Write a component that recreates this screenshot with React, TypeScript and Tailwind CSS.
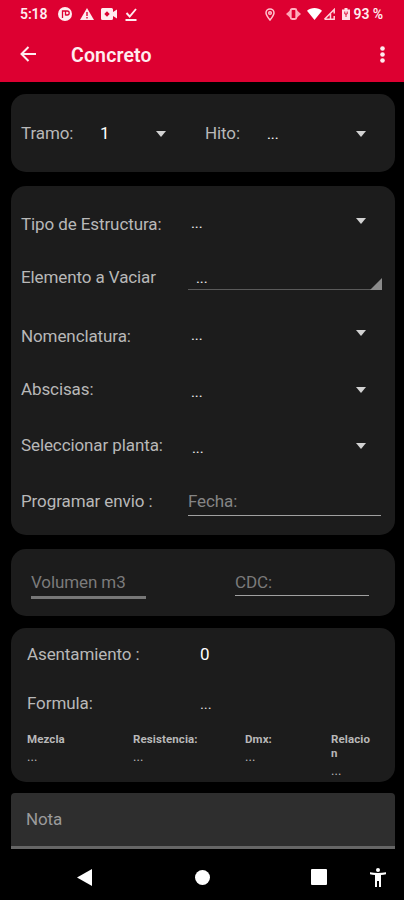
import React from 'react';

type FieldRowProps = {
  label: string;
  className: string;
  valueClassName?: string;
  arrowClassName?: string;
};

const Caret: React.FC<{ className?: string }> = ({ className = '' }) => (
  <svg viewBox="0 0 10 6" className={`h-[6px] w-[10px] fill-[#d2d2d2] ${className}`}>
    <path d="M0 0h10L5 6z" />
  </svg>
);

const Card: React.FC<{ className?: string; children: React.ReactNode }> = ({
  className = '',
  children
}) => <section className={`rounded-[15px] bg-[#1c1c1c] ${className}`}>{children}</section>;

const FieldRow: React.FC<FieldRowProps> = ({
  label,
  className,
  valueClassName = '',
  arrowClassName = ''
}) => (
  <div className={`flex items-center ${className}`}>
    <span className="w-[170px] whitespace-nowrap">{label}</span>
    <span className={`text-[15px] text-[#f0f0f0] ${valueClassName}`}>...</span>
    <Caret className={`mr-[29px] ml-auto ${arrowClassName}`} />
  </div>
);

const StatusBar = () => (
  <div className="flex h-7 items-center pr-[21px] pl-[20px] text-[14px] font-semibold text-[#ffecef]">
    <span className="w-[38px] tracking-[-0.1px]">5:18</span>
    <svg viewBox="0 0 14 14" className="h-[14px] w-[14px]">
      <circle cx="7" cy="7" r="7" fill="#ffecef" />
      <path d="M4.5 11V4h3M7.5 8.500V4h1.700a2 2 0 0 1 0 4H7.500" fill="none" stroke="#dd0031" strokeWidth="1.3" />
    </svg>
    <svg viewBox="0 0 14 12" className="ml-[8px] h-[12px] w-[14px]">
      <path d="M7 0l7 12H0z" fill="#ffecef" />
      <path d="M7 4v4M7 9v1.5" stroke="#dd0031" strokeWidth="1.4" />
    </svg>
    <svg viewBox="0 0 16 12" className="ml-[7px] h-[12px] w-[16px]">
      <path d="M1.5 0h9A1.5 1.5 0 0 1 12 1.5V4l4-2.5v9L12 8v2.5a1.5 1.5 0 0 1-1.5 1.5h-9A1.5 1.5 0 0 1 0 10.5v-9A1.5 1.5 0 0 1 1.5 0z" fill="#ffecef" />
      <path d="M6 3.3l2.7 2.700L6 8.700 3.300 6z" fill="#dd0031" />
    </svg>
    <svg viewBox="0 0 12 13" className="ml-[8px] h-[13px] w-[12px]" fill="none" stroke="#ffecef" strokeWidth="1.9">
      <path d="M1.5 5l3.200 3.500L11 1M0.500 12h11" />
    </svg>

    <svg viewBox="0 0 10 13" className="ml-auto h-[13px] w-[10px]" fill="none" stroke="#ffc4cf" strokeWidth="1.5">
      <path d="M5 12C2.500 8.800 1 6.800 1 4.900a4 4 0 0 1 8 0C9 6.800 7.500 8.800 5 12z" />
      <circle cx="5" cy="5" r="1.3" />
    </svg>
    <svg viewBox="0 0 15 12" className="ml-[11px] h-[12px] w-[15px]">
      <path d="M4.500 2v8L0 6zM10.500 2v8L15 6z" fill="#ffa5b6" />
      <rect x="4.700" y="1" width="5.600" height="10" rx="1.500" fill="none" stroke="#ffb0bf" strokeWidth="1.9" />
    </svg>
    <svg viewBox="0 0 15 12" className="ml-[6px] h-[12px] w-[15px] fill-white">
      <path d="M7.500 12L0 2.800C4-.9 11-.9 15 2.800z" />
    </svg>
    <svg viewBox="0 0 12 12" className="ml-[1px] h-[12px] w-[12px]" fill="none" stroke="#ffd3db" strokeWidth="1.5">
      <path d="M1.500 11.200L11.200 1.500v4M11.200 8v3.200H1.500M7.500 6v5" />
    </svg>
    <svg viewBox="0 0 8 12" className="ml-[7px] h-[12px] w-[8px]">
      <path d="M2.500 0h3v1.500H8V12H0V1.500h2.500z" fill="#ffe0e6" />
      <path d="M2.800 3.500v2.500h2.400V3.500M4 6v3" fill="none" stroke="#dd0031" strokeWidth="0.9" />
    </svg>
    <span className="ml-[4px] whitespace-nowrap">93 %</span>
  </div>
);

const NavigationBar = () => (
  <nav className="flex h-[51px] items-center pt-[5px] pl-[77px]">
    <svg viewBox="0 0 15 17" className="h-[17px] w-[15px] fill-white">
      <path d="M15 0v17L0 8.500z" />
    </svg>
    <span className="ml-[103px] size-[15px] rounded-full bg-white"></span>
    <span className="ml-[101px] size-[16px] rounded-[1px] bg-white"></span>
    <svg viewBox="0 0 16 19" className="ml-[43px] h-[19px] w-[16px] fill-white">
      <circle cx="8" cy="2" r="2" />
      <path d="M0 4.300c5 1 11 1 16 0v1.900c-1.700.4-3.300.6-5 .7V19H9v-6H7v6H5V6.900c-1.700-.1-3.300-.3-5-.7z" />
    </svg>
  </nav>
);

const mixColumns = [
  { title: 'Mezcla', width: 'w-[106px]' },
  { title: 'Resistencia:', width: 'w-[112px]' },
  { title: 'Dmx:', width: 'w-[86px]' },
  { title: 'Relacion', width: 'w-[43px]' }
];

const App = () => {
  return (
    <div className="flex h-[900px] w-[404px] flex-col overflow-hidden bg-black font-['Roboto',sans-serif] text-[17px] tracking-[-0.1px] text-[#b8b8b8]">
      <header className="h-[82px] bg-[#dd0031]">
        <StatusBar />
        <div className="flex h-[54px] items-center pl-[20px]">
          <svg viewBox="0 0 16 16" className="mb-[2px] size-[16px]" fill="none" stroke="#ffecef" strokeWidth="2">
            <path d="M16 8H1.500M8.500 1L1.500 8l7 7" />
          </svg>
          <h1 className="ml-[35px] pt-[1px] text-[19.5px] font-semibold tracking-[0.15px] text-[#ffecef]">Concreto</h1>
          <svg viewBox="0 0 5 17" className="mr-[19px] mb-px ml-auto h-[17px] w-[5px] fill-[#ffecef]">
            <circle cx="2.500" cy="2.500" r="2.300" />
            <circle cx="2.500" cy="8.500" r="2.300" />
            <circle cx="2.500" cy="14.500" r="2.300" />
          </svg>
        </div>
      </header>

      <main className="flex flex-col pr-[9px] pl-[11px]">
        <Card className="mt-[12px] flex h-[78px] items-center pt-px pl-[10px]">
          <span className="w-[79px]">Tramo:</span>
          <span className="w-[56px] text-white">1</span>
          <Caret />
          <span className="ml-[39px] w-[62px]">Hito:</span>
          <span className="pt-px text-[15px] text-white">...</span>
          <Caret className="mr-[29px] ml-auto" />
        </Card>

        <Card className="mt-[14px] h-[349px] pt-[12px] pl-[10px]">
          <FieldRow label="Tipo de Estructura:" className="h-[52px] pt-px" valueClassName="pb-[3px]" arrowClassName="mb-[8px]" />
          <div className="flex h-[54px] items-center">
            <span className="w-[167px] pt-px">Elemento a Vaciar</span>
            <div className="mb-px flex h-[27px] w-[194px] items-end justify-between border-b border-[#5a5a5a]">
              <span className="pl-[8px] text-[15px] text-[#f0f0f0]">...</span>
              <svg viewBox="0 0 12 12" className="-mb-px h-[12px] w-[12px] fill-[#8b8b8b]">
                <path d="M12 0v12H0z" />
              </svg>
            </div>
          </div>
          <FieldRow label="Nomenclatura:" className="h-[64px] pt-px" valueClassName="pb-[2px]" arrowClassName="mb-[8px]" />
          <FieldRow label="Abscisas:" className="h-[44px]" valueClassName="pt-[4px]" arrowClassName="mb-px" />
          <FieldRow label="Seleccionar planta:" className="h-[68px]" valueClassName="pt-[4px] pl-px" arrowClassName="mb-px" />
          <div className="flex h-[44px] items-center">
            <span className="w-[167px]">Programar envio :</span>
            <div className="mb-px h-[28px] w-[193px] border-b border-[#a0a0a0] pt-px text-[#858585]">Fecha:</div>
          </div>
        </Card>

        <Card className="mt-[14px] flex h-[67px] items-start pt-[21px] pl-[20px] text-[#7b7b7b]">
          <div className="h-[29px] w-[115px] border-b-[3px] border-[#777777]">Volumen m3</div>
          <div className="ml-[89px] h-[26px] w-[134px] border-b border-[#a0a0a0]">CDC:</div>
        </Card>

        <Card className="mt-[12px] h-[154px] pt-[2px] pl-[16px]">
          <div className="flex h-[49px] items-center">
            <span className="w-[173px]">Asentamiento :</span>
            <span className="text-white">0</span>
          </div>
          <div className="flex h-[49px] items-center">
            <span className="w-[173px]">Formula:</span>
            <span className="pt-[2px] text-[15px] text-[#dddddd]">...</span>
          </div>
          <div className="mt-[4px] flex items-start text-[11.5px] tracking-[0.1px]">
            {mixColumns.map((column) => (
              <div key={column.title} className={column.width}>
                <p className="leading-[14px] font-bold break-all">{column.title}</p>
                <p className="mt-[3px] text-[13px] leading-[16px]">...</p>
              </div>
            ))}
          </div>
        </Card>

        <div className="mt-[11px] flex h-[56px] items-center rounded-t-[4px] border-b-[3px] border-[#666666] bg-[#2e2e2e] pt-px pl-[15px] text-[#9b9b9b]">
          Nota
        </div>
      </main>

      <NavigationBar />
    </div>
  );
};

export default App;
